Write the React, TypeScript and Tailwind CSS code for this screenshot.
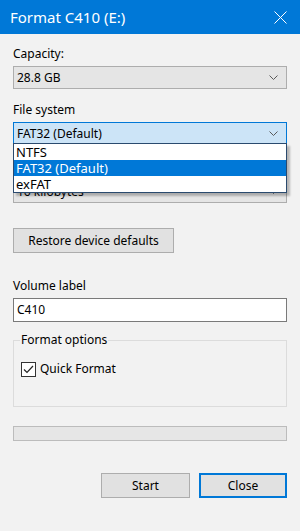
import React from "react";

const font = { fontFamily: '"Segoe UI", "Noto Sans", sans-serif' };

const Chevron: React.FC = () => (
  <svg width="9" height="5" viewBox="0 0 9 5" className="shrink-0">
    <polyline points="0.5,0.5 4.5,4.5 8.5,0.5" fill="none" stroke="#5a5a5a" strokeWidth="1" />
  </svg>
);

const Combo: React.FC<{ value: string; focused?: boolean; className?: string }> = ({
  value,
  focused,
  className = "",
}) => (
  <div
    className={`h-[23px] flex items-center justify-between pl-[3px] pr-[8px] border ${
      focused ? "bg-[#cce4f7] border-[#0078d7]" : "bg-[#e5e5e5] border-[#adadad]"
    } ${className}`}
  >
    <span className="text-[12px] text-black leading-none">{value}</span>
    <Chevron />
  </div>
);

const options = ["NTFS", "FAT32 (Default)", "exFAT"];

export default function App() {
  return (
    <div className="w-[300px] h-[531px] bg-[#f2f2f2] flex flex-col overflow-hidden" style={font}>
      <header className="h-[34px] shrink-0 bg-[#0078d7] flex items-center justify-between pl-[10px] pr-[13px]">
        <span className="text-white text-[15px]">Format C410 (E:)</span>
        <svg width="13" height="13" viewBox="0 0 13 13">
          <path d="M0.5 0.5 L12.5 12.5 M12.5 0.5 L0.5 12.5" stroke="#ffffff" strokeWidth="1" />
        </svg>
      </header>

      <main className="relative flex flex-col px-[13px] text-[12px] text-black">
        <label className="mt-[12px] h-[16px] leading-[16px]">Capacity:</label>
        <Combo value="28.8 GB" className="mt-[4px]" />

        <label className="mt-[13px] h-[16px] leading-[16px]">File system</label>
        <Combo value="FAT32 (Default)" focused className="mt-[4px]" />

        {/* allocation size box, mostly hidden under the open list */}
        <Combo value="16 kilobytes" className="mt-[35px]" />

        {/* open list of the file system box */}
        <ul className="absolute left-[13px] top-[109px] w-[274px] bg-white border border-[#2a4a6e] shadow-[3px_3px_2px_rgba(0,0,0,0.25)] text-[13px]">
          {options.map(o => (
            <li
              key={o}
              className={`h-[16px] leading-[16px] pl-[2px] ${
                o === "FAT32 (Default)" ? "bg-[#0078d7] text-white" : "text-black"
              }`}
            >
              {o}
            </li>
          ))}
        </ul>

        <button className="mt-[25px] w-[161px] h-[25px] bg-[#e1e1e1] border border-[#adadad] text-[12px]">
          Restore device defaults
        </button>

        <label className="mt-[25px] h-[16px] leading-[16px]">Volume label</label>
        <div className="mt-[4px] h-[24px] bg-white border border-[#7a7a7a] flex items-center pl-[3px]">C410</div>

        <fieldset className="mt-[11px] h-[74px] border border-[#dcdcdc] px-[6px]">
          <legend className="px-[1px] leading-[14px]">Format options</legend>
          <div className="mt-[13px] ml-[1px] flex items-center gap-[4px]">
            <span className="w-[15px] h-[15px] bg-white border border-[#333333] flex items-center justify-center">
              <svg width="11" height="9" viewBox="0 0 11 9">
                <polyline points="1,4.5 4,7.5 10,1" fill="none" stroke="#222222" strokeWidth="1.2" />
              </svg>
            </span>
            <span>Quick Format</span>
          </div>
        </fieldset>

        <div className="mt-[19px] h-[15px] bg-[#e6e6e6] border border-[#bcbcbc]" />

        <div className="mt-[32px] flex justify-end gap-[9px]">
          <button className="w-[89px] h-[25px] bg-[#e1e1e1] border border-[#adadad]">Start</button>
          <button className="w-[88px] h-[25px] bg-[#e1e1e1] border-2 border-[#0078d7]">Close</button>
        </div>
      </main>
    </div>
  );
}
